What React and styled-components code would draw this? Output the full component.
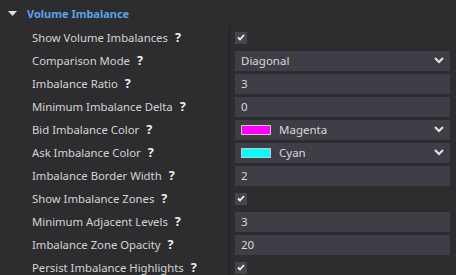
import { Fragment } from "react";
import styled, { createGlobalStyle } from "styled-components";

const GlobalStyle = createGlobalStyle`
  html, body {
    margin: 0;
    padding: 0;
    background: #2d2d30;
  }
  body {
    font-family: "Noto Sans", "Open Sans", sans-serif;
    overflow: hidden;
  }
`;

const Panel = styled.div`
  width: 456px;
  height: 275px;
  background: #2d2d30;
  overflow: hidden;
`;

const Header = styled.div`
  display: flex;
  align-items: center;
  height: 26px;
  padding-left: 8px;
  gap: 10px;
  color: #5ba3e8;
  font-weight: 700;
  font-size: 11px;
`;

const Grid = styled.div`
  display: grid;
  grid-template-columns: 229px 1px 1fr;
  grid-auto-rows: 23px;
`;

const Label = styled.div`
  display: flex;
  align-items: center;
  gap: 7px;
  padding-left: 32px;
  color: #d4d4d4;
  font-size: 11.3px;
  white-space: nowrap;
`;

const Help = styled.span`
  color: #f0f0f0;
  font-weight: 700;
  font-size: 12.5px;
`;

const Divider = styled.div`
  background: #212124;
`;

const Cell = styled.div`
  display: flex;
  align-items: center;
  padding: 0 6px 0 5px;
`;

const Box = styled.div`
  flex: 1;
  height: 20px;
  display: flex;
  align-items: center;
  gap: 8px;
  padding: 0 6px;
  background: #3f3e46;
  color: #d8d8d8;
  font-size: 11.5px;
`;

const Value = styled.span`
  flex: 1;
`;

const Swatch = styled.span`
  width: 28px;
  height: 8px;
  border: 1px solid #c8c8c8;
  background: ${(p) => p.$color};
`;

const Check = styled.div`
  width: 12px;
  height: 12px;
  background: #46464c;
  display: flex;
  align-items: center;
  justify-content: center;
`;

const Tick = () => (
  <svg width="8" height="7" viewBox="0 0 8 7">
    <path d="M1 3.5 L3 5.5 L7 1" fill="none" stroke="#f2f2f2" strokeWidth="1.8" />
  </svg>
);

const Chevron = () => (
  <svg width="10" height="7" viewBox="0 0 10 7">
    <path d="M1 1 L5 5 L9 1" fill="none" stroke="#e6e6e6" strokeWidth="2" />
  </svg>
);

const Caret = () => (
  <svg width="9" height="5" viewBox="0 0 9 5">
    <path d="M0 0 L9 0 L4.5 5 Z" fill="#e0e0e0" />
  </svg>
);

const rows = [
  { label: "Show Volume Imbalances", type: "check" },
  { label: "Comparison Mode", type: "select", value: "Diagonal" },
  { label: "Imbalance Ratio", type: "text", value: "3" },
  { label: "Minimum Imbalance Delta", type: "text", value: "0" },
  { label: "Bid Imbalance Color", type: "color", value: "Magenta", color: "#ff00ff" },
  { label: "Ask Imbalance Color", type: "color", value: "Cyan", color: "#00ffff" },
  { label: "Imbalance Border Width", type: "text", value: "2" },
  { label: "Show Imbalance Zones", type: "check" },
  { label: "Minimum Adjacent Levels", type: "text", value: "3" },
  { label: "Imbalance Zone Opacity", type: "text", value: "20" },
  { label: "Persist Imbalance Highlights", type: "check" },
];

function Control({ row }) {
  if (row.type === "check") {
    return (
      <Check>
        <Tick />
      </Check>
    );
  }
  return (
    <Box>
      {row.type === "color" && <Swatch $color={row.color} />}
      <Value>{row.value}</Value>
      {(row.type === "select" || row.type === "color") && <Chevron />}
    </Box>
  );
}

export default function App() {
  return (
    <Panel>
      <GlobalStyle />
      <Header>
        <Caret />
        Volume Imbalance
      </Header>
      <Grid>
        {rows.map((row) => (
          <Fragment key={row.label}>
            <Label>
              {row.label}
              <Help>?</Help>
            </Label>
            <Divider />
            <Cell>
              <Control row={row} />
            </Cell>
          </Fragment>
        ))}
      </Grid>
    </Panel>
  );
}
